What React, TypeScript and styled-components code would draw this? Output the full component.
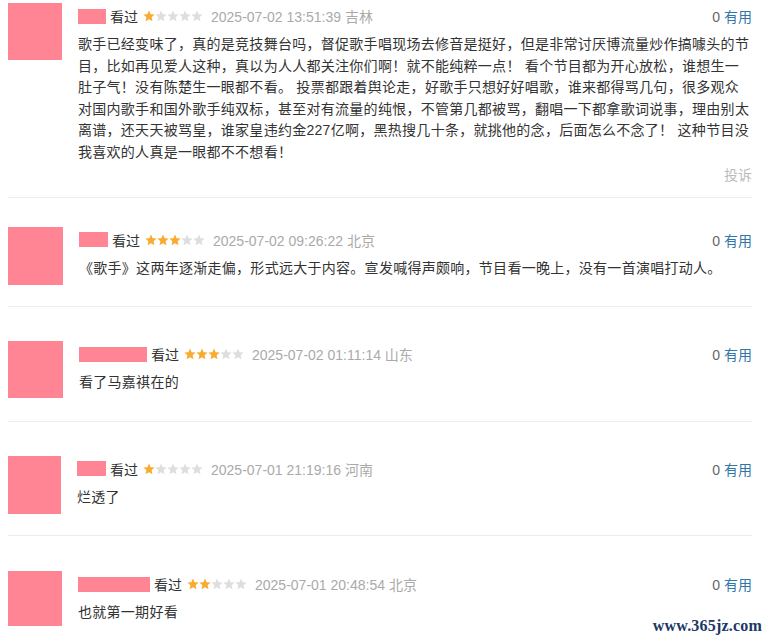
import React from 'react';
import styled, { createGlobalStyle } from 'styled-components';

const GlobalStyle = createGlobalStyle`
  html, body {
    margin: 0;
    padding: 0;
    background: #fff;
  }
  body {
    font-family: "Liberation Sans", "Noto Sans CJK SC", sans-serif;
    color: #333;
  }
`;

const Page = styled.div`
  position: relative;
  width: 774px;
  height: 639px;
  overflow: hidden;
  background: #fff;
`;

const List = styled.div`
  padding: 0 22px 0 8px;
`;

const Item = styled.div<{ $top: number }>`
  display: flex;
  gap: 16px;
  padding-top: ${p => p.$top}px;
  border-bottom: 1px solid #ececec;

  &:last-child {
    border-bottom: none;
  }
`;

const Avatar = styled.div<{ $w: number; $h: number }>`
  flex: 0 0 55px;
  width: ${p => p.$w}px;
  height: ${p => p.$h}px;
  max-width: ${p => p.$w}px;
  background: #ff8494;
`;

const Content = styled.div`
  flex: 1;
  min-width: 0;
`;

const Header = styled.div`
  display: flex;
  align-items: center;
  height: 26px;
  font-size: 14px;
  white-space: nowrap;
`;

const Name = styled.span<{ $w: number }>`
  display: inline-block;
  width: ${p => p.$w}px;
  height: 15px;
  background: #ff8494;
  margin-right: 4px;
`;

const Watched = styled.span`
  color: #333;
`;

const Stars = styled.span`
  display: inline-flex;
  margin: 0 8px 0 5px;
`;

const Time = styled.span`
  color: #aaa;
`;

const Votes = styled.span`
  margin-left: auto;
  color: #666;

  a {
    color: #37a;
    text-decoration: none;
    margin-left: 4px;
  }
`;

const Body = styled.p`
  margin: 5px 0 0;
  font-size: 14px;
  line-height: 21.6px;
  letter-spacing: 0.28px;
  color: #333;
`;

const Footer = styled.div<{ $report?: boolean }>`
  height: ${p => (p.$report ? 33 : 27)}px;
  display: flex;
  justify-content: flex-end;
  font-size: 14px;
  line-height: 22px;
  color: #bbb;
`;

const Watermark = styled.div`
  position: absolute;
  right: 12px;
  bottom: 4px;
  font-family: "Liberation Serif", "DejaVu Serif", serif;
  font-weight: bold;
  font-size: 16px;
  color: #1c3766;
  letter-spacing: 0.2px;
`;

const Star: React.FC<{ on: boolean }> = ({ on }) => (
  <svg width="12" height="12" viewBox="0 0 12 12">
    <polygon
      points="6,0.6 7.6,4.2 11.6,4.6 8.6,7.3 9.5,11.3 6,9.2 2.5,11.3 3.4,7.3 0.4,4.6 4.4,4.2"
      fill={on ? '#f8ab2f' : '#dedede'}
    />
  </svg>
);

interface Comment {
  top: number;
  avatar: [number, number];
  name: number;
  rating: number;
  time: string;
  text: string;
  report?: boolean;
}

const comments: Comment[] = [
  {
    top: 3,
    avatar: [54, 57],
    name: 28,
    rating: 1,
    time: '2025-07-02 13:51:39 吉林',
    text:
      '歌手已经变味了，真的是竞技舞台吗，督促歌手唱现场去修音是挺好，但是非常讨厌博流量炒作搞噱头的节目，比如再见爱人这种，真以为人人都关注你们啊！就不能纯粹一点！ 看个节目都为开心放松，谁想生一肚子气！没有陈楚生一眼都不看。 投票都跟着舆论走，好歌手只想好好唱歌，谁来都得骂几句，很多观众对国内歌手和国外歌手纯双标，甚至对有流量的纯恨，不管第几都被骂，翻唱一下都拿歌词说事，理由别太离谱，还天天被骂皇，谁家皇违约金227亿啊，黑热搜几十条，就挑他的念，后面怎么不念了！ 这种节目没我喜欢的人真是一眼都不不想看！',
    report: true,
  },
  {
    top: 29,
    avatar: [58, 58],
    name: 29,
    rating: 3,
    time: '2025-07-02 09:26:22 北京',
    text: '《歌手》这两年逐渐走偏，形式远大于内容。宣发喊得声颇响，节目看一晚上，没有一首演唱打动人。',
  },
  {
    top: 34,
    avatar: [57, 57],
    name: 68,
    rating: 3,
    time: '2025-07-02 01:11:14 山东',
    text: '看了马嘉祺在的',
  },
  {
    top: 34,
    avatar: [53, 58],
    name: 29,
    rating: 1,
    time: '2025-07-01 21:19:16 河南',
    text: '烂透了',
  },
  {
    top: 35,
    avatar: [54, 55],
    name: 72,
    rating: 2,
    time: '2025-07-01 20:48:54 北京',
    text: '也就第一期好看',
  },
];

export default function App() {
  return (
    <Page>
      <GlobalStyle />
      <List>
        {comments.map((c, i) => (
          <Item key={i} $top={c.top}>
            <Avatar $w={c.avatar[0]} $h={c.avatar[1]} />
            <Content>
              <Header>
                <Name $w={c.name} />
                <Watched>看过</Watched>
                <Stars>
                  {[0, 1, 2, 3, 4].map(n => (
                    <Star key={n} on={n < c.rating} />
                  ))}
                </Stars>
                <Time>{c.time}</Time>
                <Votes>
                  0<a href="#">有用</a>
                </Votes>
              </Header>
              <Body>{c.text}</Body>
              <Footer $report={c.report}>{c.report && '投诉'}</Footer>
            </Content>
          </Item>
        ))}
      </List>
      <Watermark>www.365jz.com</Watermark>
    </Page>
  );
}
